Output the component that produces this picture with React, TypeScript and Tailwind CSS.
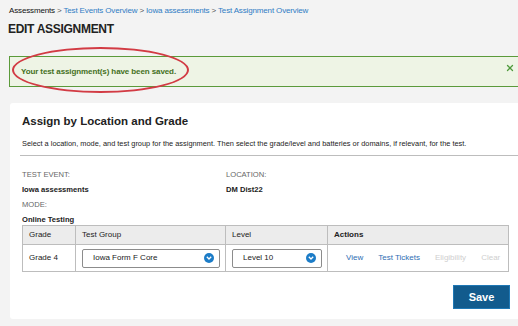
import { X } from 'lucide-react';

function SelectBox({ value, width }: { value: string; width: string }) {
  return (
    <div className={`${width} h-[19px] border border-[#8c8c8c] rounded-[2px] bg-white flex items-center justify-between pl-[10px] pr-[5px]`}>
      <span className="text-[#222]">{value}</span>
      <span className="w-[10px] h-[10px] rounded-full bg-[#1c7cc7] flex items-center justify-center">
        <svg width="6" height="4" viewBox="0 0 6 4">
          <path d="M0.8 0.8 L3 3 L5.2 0.8" stroke="white" strokeWidth="1.3" fill="none" />
        </svg>
      </span>
    </div>
  );
}

export default function App() {
  return (
    <div className="relative w-[518px] h-[326px] overflow-hidden bg-[#f3f3f3] text-[#222]" style={{ fontFamily: '"Liberation Sans", Arial, sans-serif' }}>
      {/* Breadcrumb */}
      <div className="pl-[9px] pt-[6px] text-[8px] leading-[10px] tracking-[-0.15px] whitespace-nowrap">
        <span className="text-[#111]">Assessments</span>
        <span className="text-[#555]"> &gt; </span>
        <span className="text-[#2f7cc4]">Test Events Overview</span>
        <span className="text-[#555]"> &gt; </span>
        <span className="text-[#2f7cc4]">Iowa assessments</span>
        <span className="text-[#555]"> &gt; </span>
        <span className="text-[#2f7cc4]">Test Assignment Overview</span>
      </div>
      <h1 className="pl-[8px] mt-[6px] text-[12px] leading-[14px] font-bold text-[#222] tracking-[-0.3px]">EDIT ASSIGNMENT</h1>

      {/* Alert */}
      <div className="ml-[9px] mt-[20px] w-[520px] h-[31px] bg-[#eef4e5] border border-[#5b9a3a] flex items-center pl-[11px] text-[8px] font-bold text-[#44701d] tracking-[-0.1px]">
        Your test assignment(s) have been saved.
      </div>
      <X className="absolute left-[505px] top-[63px] w-[10px] h-[10px] text-[#4f9a3c]" strokeWidth={3} />
      <div className="absolute left-[12px] top-[47px] w-[177px] h-[46px] rounded-[50%] border-2 border-[#d23b44]" />

      {/* Card */}
      <div className="ml-[10px] mt-[16px] w-[510px] h-[216px] bg-white rounded-[3px] pt-[10px]">
        <h2 className="pl-[12px] text-[11.5px] leading-[16px] font-bold text-[#222]">Assign by Location and Grade</h2>
        <p className="pl-[12px] mt-[10px] text-[7.4px] leading-[10px] text-[#222] whitespace-nowrap">
          Select a location, mode, and test group for the assignment. Then select the grade/level and batteries or domains, if relevant, for the test.
        </p>
        <div className="ml-[10px] mt-[6px] h-px bg-[#bdbdbd]" />

        <div className="pl-[12px] mt-[14px] text-[7.6px] leading-[10px]">
          <div className="flex">
            <div className="w-[204px]">
              <div className="text-[#666]">TEST EVENT:</div>
              <div className="mt-[5px] font-bold text-[#222]">Iowa assessments</div>
            </div>
            <div>
              <div className="text-[#666]">LOCATION:</div>
              <div className="mt-[5px] font-bold text-[#222]">DM Dist22</div>
            </div>
          </div>
          <div className="mt-[5px] text-[#666]">MODE:</div>
          <div className="mt-[5px] font-bold text-[#222]">Online Testing</div>
        </div>

        {/* Table */}
        <div className="ml-[12px] w-[487px] border border-[#bdbdbd] text-[8px] whitespace-nowrap">
          <div className="flex h-[19px] bg-[#ececec] border-b border-[#bdbdbd] items-center">
            <div className="w-[53px] h-full border-r border-[#bdbdbd] flex items-center pl-[6px]">Grade</div>
            <div className="w-[150px] h-full border-r border-[#bdbdbd] flex items-center pl-[6px]">Test Group</div>
            <div className="w-[102px] h-full border-r border-[#bdbdbd] flex items-center pl-[6px]">Level</div>
            <div className="flex-1 h-full flex items-center pl-[6px] font-bold">Actions</div>
          </div>
          <div className="flex h-[26px] items-center">
            <div className="w-[53px] h-full border-r border-[#bdbdbd] flex items-center pl-[6px]">Grade 4</div>
            <div className="w-[150px] h-full border-r border-[#bdbdbd] flex items-center pl-[6px]">
              <SelectBox value="Iowa Form F Core" width="w-[138px]" />
            </div>
            <div className="w-[102px] h-full border-r border-[#bdbdbd] flex items-center pl-[6px]">
              <SelectBox value="Level 10" width="w-[90px]" />
            </div>
            <div className="flex-1 h-full flex items-center pl-[18px] gap-[15px]">
              <span className="text-[#2e6db3]">View</span>
              <span className="text-[#2e6db3]">Test Tickets</span>
              <span className="text-[#cfcfcf]">Eligibility</span>
              <span className="text-[#cfcfcf]">Clear</span>
            </div>
          </div>
        </div>

        <div className="flex justify-end pr-[10px] mt-[13px]">
          <button className="w-[57px] h-[24px] bg-[#125b8d] border border-[#1f78b5] text-white text-[11px] font-bold">Save</button>
        </div>
      </div>
    </div>
  );
}
